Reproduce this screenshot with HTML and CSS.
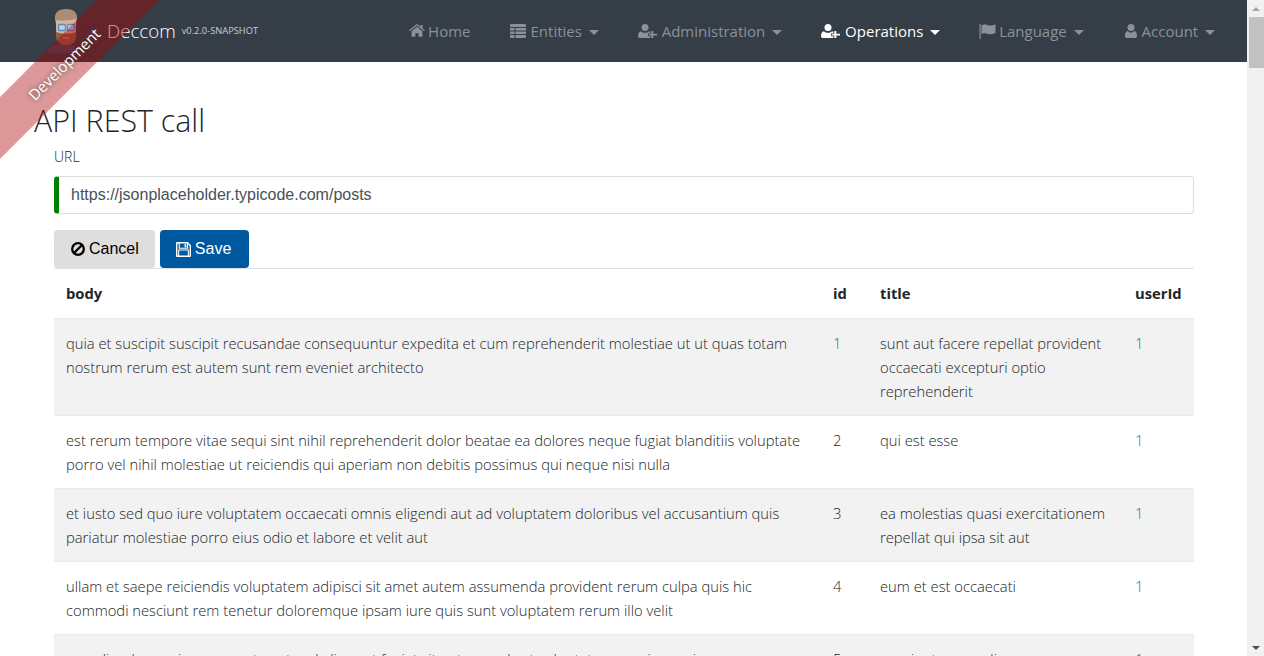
FILE: index.html
```html
<!DOCTYPE html>
<html lang="en">
<head>
    <meta charset="UTF-8">
    <title>API REST call</title>
    <link rel="stylesheet" href="styles.css">
</head>
<body>
    <svg class="icon-defs" width="0" height="0">
        <symbol id="i-home" viewBox="0 0 18 16"><path d="M9 3.200 2.800 8.400V14a.6.6 0 0 0 .6.6h3.800v-4h3.600v4h3.800a.6.6 0 0 0 .6-.6V8.400zM18 7.200 15.400 5V1h-2.200v2.200L10 .6a1.600 1.600 0 0 0-2 0L0 7.200l.9 1.100L9 1.700l8.100 6.600z"/></symbol>
        <symbol id="i-list" viewBox="0 0 16 14"><path d="M0 1.200A1.200 1.200 0 0 1 1.200 0h13.600A1.200 1.200 0 0 1 16 1.200V3H0zM0 4h4.500v2.500H0zM5.500 4H16v2.500H5.500zM0 7.500h4.500V10H0zM5.500 7.500H16V10H5.500zM0 11h4.500v3H1.200A1.200 1.200 0 0 1 0 12.800zM5.500 11H16v1.800a1.200 1.200 0 0 1-1.200 1.200H5.500z"/></symbol>
        <symbol id="i-userplus" viewBox="0 0 19 14"><circle cx="7" cy="3.500" r="3.500"/><path d="M0 12.300C0 9.500 1 7.200 3 7.200c1 1 2.400 1.500 4 1.500s3-.5 4-1.500c.5 0 1 .2 1.300.5v1.500h-2.100v3h2.100V14H1.700A1.700 1.700 0 0 1 0 12.300zM13.300 7h2v2.800H19v1.600h-3.700V14h-2v-2.600h-2.100V9.800h2.100z"/></symbol>
        <symbol id="i-flag" viewBox="0 0 16 15"><path d="M0 0h1.200v15H0zM2 1.500C4 .3 6 .3 8 1c2 .8 4 .8 8-.5v8.500c-4 1.500-6 1.500-8 .7-2-.8-4-.8-6 .3z"/></symbol>
        <symbol id="i-user" viewBox="0 0 12 14"><circle cx="6" cy="3.500" r="3.500"/><path d="M0 11.900C0 9.500.8 7 2.700 7c1 1 2 1.500 3.300 1.500S8.300 8 9.300 7C11.200 7 12 9.500 12 11.900 12 13.200 11.200 14 10 14H2C.8 14 0 13.200 0 11.900z"/></symbol>
        <symbol id="i-ban" viewBox="0 0 14 14"><circle cx="7" cy="7" r="5.800" fill="none" stroke="currentColor" stroke-width="2.300"/><path d="M3 11 11 3" stroke="currentColor" stroke-width="2.300"/></symbol>
        <symbol id="i-save" viewBox="0 0 14 14"><path fill-rule="evenodd" d="M1 0h10l3 3v10a1 1 0 0 1-1 1H1a1 1 0 0 1-1-1V1a1 1 0 0 1 1-1zm2.500 1.300v4h6.500v-4zM8 1.800h1.300v3H8zM3 8v4.700h8V8zM1.300 1.300v11.400H2V7h10v5.700h.7V3.500L11.300 2v4.300H2.500V1.300z"/></symbol>
    </svg>

    <div class="ribbon"><span>Development</span></div>

    <div class="window">
        <div class="page">
            <nav class="navbar">
                <a class="brand" href="#">
                    <svg class="avatar" viewBox="0 0 32 46" width="32" height="46">
                        <path d="M0 45c0-6 6-9 15-9s15 3 15 9z" fill="#3f4a66"/>
                        <path d="M7 12C6 4 11 1 18 1s12 3 11 11l-1 4H8z" fill="#ab8d76"/>
                        <path d="M8 12c4 1 12 1 20-1v10c0 8-4 13-10 13S8 29 8 21z" fill="#dcb29a"/>
                        <path d="M8 24c3 1 6 1.500 10 1.500s7-.5 10-1.500v4c0 6-4 9-10 9S8 34 8 28z" fill="#915c49"/>
                        <path d="M15 29h6v1.500h-6z" fill="#c98a76"/>
                        <g fill="#b9d3e4" stroke="#4f8ec9" stroke-width="1.300">
                            <rect x="10.500" y="16.500" width="7" height="6" rx="1"/>
                            <rect x="19.500" y="16.500" width="7" height="6" rx="1"/>
                        </g>
                    </svg>
                    <span class="brand-title">Deccom</span>
                    <span class="brand-version">v0.2.0-SNAPSHOT</span>
                </a>
                <ul class="nav">
                    <li><svg class="nav-icon home"><use href="#i-home"/></svg>Home</li>
                    <li><svg class="nav-icon list"><use href="#i-list"/></svg>Entities<i class="caret"></i></li>
                    <li><svg class="nav-icon userplus"><use href="#i-userplus"/></svg>Administration<i class="caret"></i></li>
                    <li class="active"><svg class="nav-icon userplus"><use href="#i-userplus"/></svg>Operations<i class="caret"></i></li>
                    <li><svg class="nav-icon flag"><use href="#i-flag"/></svg>Language<i class="caret"></i></li>
                    <li><svg class="nav-icon user"><use href="#i-user"/></svg>Account<i class="caret"></i></li>
                </ul>
            </nav>

            <main class="content">
                <h2>API REST call</h2>
                <div class="form">
                    <label for="url">URL</label>
                    <input id="url" class="url-input" type="text" value="https://jsonplaceholder.typicode.com/posts">
                    <div class="actions">
                        <button class="btn btn-cancel"><svg class="btn-icon"><use href="#i-ban"/></svg>Cancel</button>
                        <button class="btn btn-save"><svg class="btn-icon"><use href="#i-save"/></svg>Save</button>
                    </div>
                    <table>
                        <colgroup>
                            <col class="col-body"><col class="col-id"><col class="col-title"><col class="col-user">
                        </colgroup>
                        <thead>
                            <tr><th>body</th><th>id</th><th>title</th><th>userId</th></tr>
                        </thead>
                        <tbody>
                            <tr>
                                <td>quia et suscipit suscipit recusandae consequuntur expedita et cum reprehenderit molestiae ut ut quas totam nostrum rerum est autem sunt rem eveniet architecto</td>
                                <td class="num">1</td>
                                <td>sunt aut facere repellat provident occaecati excepturi optio reprehenderit</td>
                                <td class="num">1</td>
                            </tr>
                            <tr>
                                <td>est rerum tempore vitae sequi sint nihil reprehenderit dolor beatae ea dolores neque fugiat blanditiis voluptate porro vel nihil molestiae ut reiciendis qui aperiam non debitis possimus qui neque nisi nulla</td>
                                <td>2</td>
                                <td>qui est esse</td>
                                <td class="num">1</td>
                            </tr>
                            <tr>
                                <td>et iusto sed quo iure voluptatem occaecati omnis eligendi aut ad voluptatem doloribus vel accusantium quis pariatur molestiae porro eius odio et labore et velit aut</td>
                                <td>3</td>
                                <td>ea molestias quasi exercitationem repellat qui ipsa sit aut</td>
                                <td class="num">1</td>
                            </tr>
                            <tr>
                                <td>ullam et saepe reiciendis voluptatem adipisci sit amet autem assumenda provident rerum culpa quis hic commodi nesciunt rem tenetur doloremque ipsam iure quis sunt voluptatem rerum illo velit</td>
                                <td>4</td>
                                <td>eum et est occaecati</td>
                                <td class="num">1</td>
                            </tr>
                            <tr>
                                <td>repudiandae veniam quaerat sunt sed alias aut fugiat sit autem sed est voluptatem omnis possimus esse voluptatibus quis est aut tenetur dolor neque</td>
                                <td>5</td>
                                <td>nesciunt quas odio</td>
                                <td class="num">1</td>
                            </tr>
                        </tbody>
                    </table>
                </div>
            </main>
        </div>

        <div class="scrollbar">
            <div class="arrow up"></div>
            <div class="track"><div class="thumb"></div></div>
            <div class="arrow down"></div>
        </div>
    </div>
</body>
</html>
```

FILE: styles.css
```css
html, body {
    height: 100%;
    margin: 0;
    overflow: hidden;
}
body {
    font-family: "Open Sans", sans-serif;
    font-size: 14.75px;
    font-weight: 300;
    line-height: 24px;
    color: #212529;
    background-color: #fff;
}
.icon-defs {
    position: absolute;
}
.window {
    display: flex;
    height: 656px;
}
.page {
    flex: 1;
    min-width: 0;
    overflow: hidden;
}

/* navbar */
.navbar {
    display: flex;
    justify-content: space-between;
    height: 62px;
    background-color: #353d47;
}
.brand {
    display: flex;
    align-items: center;
    padding-left: 48px;
    color: #fff;
    text-decoration: none;
}
.brand-title {
    margin-left: 27px;
    font-size: 18.7px;
}
.brand-version {
    margin-left: 6px;
    font-size: 9.3px;
    font-weight: 400;
    color: #c9ccd0;
}
.nav {
    display: flex;
    align-items: center;
    gap: 39px;
    margin: 0;
    padding: 0 32px 0 0;
    list-style: none;
    font-size: 15px;
    font-weight: 400;
    color: #8b9199;
}
.nav li {
    display: flex;
    align-items: center;
}
.nav .active {
    color: #fff;
}
.nav-icon {
    fill: currentColor;
}
.nav-icon.home { width: 16px; height: 14px; margin-right: 3px; }
.nav-icon.list { width: 16px; height: 14px; margin-right: 5px; }
.nav-icon.userplus { width: 19px; height: 14px; margin-right: 5px; }
.nav-icon.flag { width: 17px; height: 15px; margin-right: 3px; }
.nav-icon.user { width: 12px; height: 14px; margin: 0 5px 0 2px; }
.caret {
    width: 0;
    height: 0;
    margin: 2px 0 0 6.800px;
    border-top: 5px solid currentColor;
    border-left: 5.500px solid transparent;
    border-right: 5.500px solid transparent;
}

/* corner ribbon */
.ribbon {
    position: absolute;
    top: 42px;
    left: -64px;
    z-index: 10;
    width: 256px;
    height: 44px;
    line-height: 44px;
    text-align: center;
    font-weight: 400;
    font-size: 15px;
    color: #fff;
    background-color: rgba(170, 0, 0, 0.4);
    transform: rotate(-45deg);
    text-shadow: 0 0 5px #444;
}

/* content */
.content {
    padding: 0 53px 0 34px;
}
h2 {
    margin: 38px 0 0;
    font-size: 30.4px;
    font-weight: 300;
    line-height: 42px;
}
.form {
    margin-left: 20px;
}
label {
    display: block;
    margin-top: 3px;
    font-size: 14px;
}
.url-input {
    display: block;
    box-sizing: border-box;
    width: 100%;
    height: 38px;
    margin-top: 7px;
    padding: 0 12px;
    border: 1px solid #ddd;
    border-left: 5px solid #008000;
    border-radius: 4px;
    font-family: "Liberation Sans", Arial, sans-serif;
    font-size: 16px;
    color: #495057;
}
.actions {
    display: flex;
    gap: 5px;
    margin-top: 16px;
}
.btn {
    display: flex;
    align-items: center;
    height: 38px;
    border: none;
    border-radius: 4px;
    font-family: "Liberation Sans", Arial, sans-serif;
    font-size: 16px;
}
.btn-cancel {
    padding: 0 16px 0 17px;
    background-color: #dedede;
    color: #000;
}
.btn-save {
    padding: 0 18px 0 16px;
    background-color: #00589f;
    color: #fff;
}
.btn-icon {
    width: 14px;
    height: 14px;
    margin-right: 4px;
    fill: currentColor;
}
.btn-save .btn-icon {
    width: 15px;
    height: 15px;
}

/* table */
table {
    width: 100%;
    border-collapse: collapse;
    table-layout: fixed;
}
.col-body { width: 767px; }
.col-id { width: 47px; }
.col-title { width: 255px; }
th {
    padding: 12px 12px 13px;
    text-align: left;
    font-weight: 700;
    border-top: 1px solid #dee2e6;
}
td {
    padding: 12px;
    vertical-align: top;
    border-top: 1px solid #e8eaec;
}
tbody tr:nth-child(odd) {
    background-color: #f2f2f2;
}
.num {
    color: #1f6bb0;
}

/* scrollbar */
.scrollbar {
    display: flex;
    flex-direction: column;
    width: 17px;
    background-color: #f1f1f1;
}
.track {
    flex: 1;
}
.thumb {
    height: 51px;
    margin: 0 0 0 2px;
    width: 15px;
    background-color: #c1c1c1;
}
.arrow {
    height: 17px;
    display: flex;
    align-items: center;
    justify-content: center;
}
.arrow.up::before, .arrow.down::before {
    content: "";
    border-left: 4px solid transparent;
    border-right: 4px solid transparent;
}
.arrow.up::before {
    border-bottom: 4px solid #a3a3a3;
}
.arrow.down::before {
    border-top: 4px solid #505050;
}
```
